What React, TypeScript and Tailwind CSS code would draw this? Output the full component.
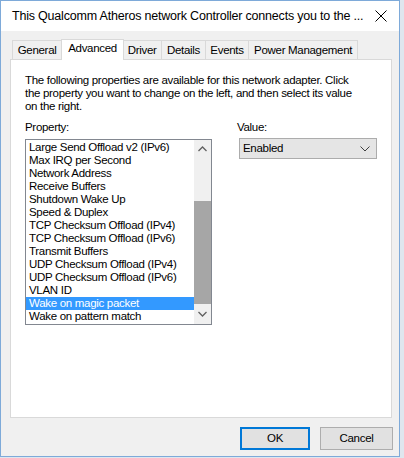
import { useState } from "react";

const props = [
  "Large Send Offload v2 (IPv6)",
  "Max IRQ per Second",
  "Network Address",
  "Receive Buffers",
  "Shutdown Wake Up",
  "Speed & Duplex",
  "TCP Checksum Offload (IPv4)",
  "TCP Checksum Offload (IPv6)",
  "Transmit Buffers",
  "UDP Checksum Offload (IPv4)",
  "UDP Checksum Offload (IPv6)",
  "VLAN ID",
  "Wake on magic packet",
  "Wake on pattern match",
];

const tabs = ["General", "Advanced", "Driver", "Details", "Events", "Power Management"];

export default function App() {
  const [sel, setSel] = useState("Wake on magic packet");
  const [tab, setTab] = useState("Advanced");

  return (
    <div className="h-[458px] w-[404px] bg-[#dfe6ee] font-['Liberation_Sans',Arial,sans-serif] text-[11.5px] tracking-[-0.3px] text-black">
      <div className="flex h-[457px] w-[400px] flex-col border border-[#7eaad9] bg-[#f0f0f0]">
        {/* title bar */}
        <div className="flex h-[30px] shrink-0 items-center justify-between bg-white pl-[11px] pr-[10px]">
          <span className="whitespace-nowrap text-[12.5px] leading-none tracking-[-0.2px]">This Qualcomm Atheros network Controller connects you to the ...</span>
          <svg width="12" height="12" viewBox="0 0 12 12" className="mr-[2px] shrink-0">
            <path d="M0.5 0.5 L11.5 11.5 M11.5 0.5 L0.5 11.5" stroke="#000" strokeWidth="1" fill="none" />
          </svg>
        </div>

        {/* tabs */}
        <div className="flex h-[28px] items-end pl-[11px] pt-[7px]">
          {tabs.map((t) =>
            t === tab ? (
              <button
                key={t}
                onClick={() => setTab(t)}
                className="relative z-10 -mx-px -mb-px h-[21px] border border-b-0 border-[#d9d9d9] bg-white px-[6px] pb-[3px] leading-none"
              >
                {t}
              </button>
            ) : (
              <button
                key={t}
                onClick={() => setTab(t)}
                className="-ml-px h-[19px] border border-b-0 border-[#d9d9d9] bg-[#f0f0f0] px-[4.7px] pt-[2px] leading-none first:ml-0"
              >
                {t}
              </button>
            )
          )}
        </div>

        {/* panel */}
        <div className="ml-[9px] mr-[7px] h-[359px] border border-[#d9d9d9] bg-white px-[14px] pt-[14px]">
          <p className="leading-[13px]">
            The following properties are available for this network adapter. Click
            <br />
            the property you want to change on the left, and then select its value
            <br />
            on the right.
          </p>

          <div className="mt-[8px] flex">
            <div className="w-[216px]">
              <div className="leading-[13px]">Property:</div>
              <div className="mt-[5px] flex h-[186px] w-[187px] border border-[#828790] bg-white">
                <ul className="flex-1 pt-[1px] leading-[13px]">
                  {props.map((p) => (
                    <li
                      key={p}
                      onClick={() => setSel(p)}
                      className={`h-[13px] cursor-default whitespace-nowrap pl-[3px] ${sel === p ? "bg-[#3399ff] text-white" : ""}`}
                    >
                      {p}
                    </li>
                  ))}
                </ul>
                <div className="flex w-[17px] flex-col bg-[#f0f0f0]">
                  <div className="flex h-[17px] items-center justify-center">
                    <svg width="9" height="6" viewBox="0 0 9 6">
                      <path d="M0.5 5 L4.5 1 L8.5 5" stroke="#606060" strokeWidth="1.3" fill="none" />
                    </svg>
                  </div>
                  <div className="mt-[44px] h-[103px] bg-[#a6a6a6]" />
                  <div className="flex flex-1 items-center justify-center">
                    <svg width="9" height="6" viewBox="0 0 9 6">
                      <path d="M0.5 1 L4.5 5 L8.5 1" stroke="#606060" strokeWidth="1.3" fill="none" />
                    </svg>
                  </div>
                </div>
              </div>
            </div>

            <div className="ml-[8px]">
              <div className="leading-[13px]">Value:</div>
              <div className="ml-[2px] mt-[4px] flex h-[21px] w-[138px] items-center justify-between border border-[#acacac] bg-[#e5e5e5] pl-[3px] pr-[6px]">
                <span>Enabled</span>
                <svg width="10" height="6" viewBox="0 0 10 6">
                  <path d="M0.5 0.5 L5 5 L9.5 0.5" stroke="#404040" strokeWidth="1" fill="none" />
                </svg>
              </div>
            </div>
          </div>
        </div>

        {/* buttons */}
        <div className="flex justify-end gap-[10px] pr-[6px] pt-[9px]">
          <button className="h-[23px] w-[70px] border-2 border-[#0078d7] bg-[#e1e1e1]">OK</button>
          <button className="h-[23px] w-[73px] border border-[#adadad] bg-[#e1e1e1]">Cancel</button>
        </div>
      </div>
    </div>
  );
}
